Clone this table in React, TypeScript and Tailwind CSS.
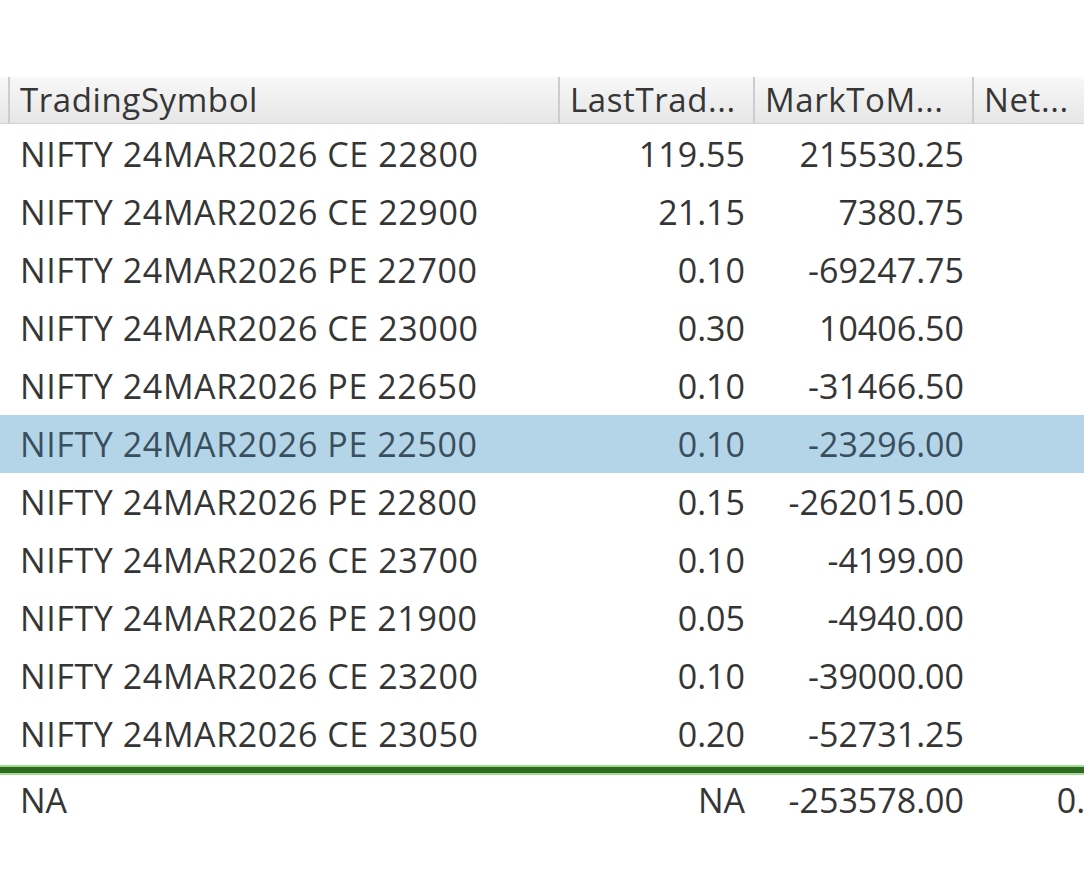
import * as React from "react"

const rows: [string, string, string][] = [
  ["NIFTY 24MAR2026 CE 22800", "119.55", "215530.25"],
  ["NIFTY 24MAR2026 CE 22900", "21.15", "7380.75"],
  ["NIFTY 24MAR2026 PE 22700", "0.10", "-69247.75"],
  ["NIFTY 24MAR2026 CE 23000", "0.30", "10406.50"],
  ["NIFTY 24MAR2026 PE 22650", "0.10", "-31466.50"],
  ["NIFTY 24MAR2026 PE 22500", "0.10", "-23296.00"],
  ["NIFTY 24MAR2026 PE 22800", "0.15", "-262015.00"],
  ["NIFTY 24MAR2026 CE 23700", "0.10", "-4199.00"],
  ["NIFTY 24MAR2026 PE 21900", "0.05", "-4940.00"],
  ["NIFTY 24MAR2026 CE 23200", "0.10", "-39000.00"],
  ["NIFTY 24MAR2026 CE 23050", "0.20", "-52731.25"],
]

const cols = "grid grid-cols-[8px_550px_195px_219px_160px]"

function HeaderCell({ children }: { children?: React.ReactNode }) {
  return (
    <div className="flex h-full items-center overflow-hidden whitespace-nowrap border-l-2 border-[#cdcdcd] pl-[10px] text-[33px] tracking-[0.6px] text-[#363636]">
      {children}
    </div>
  )
}

export default function App() {
  return (
    <div
      className="h-[880px] w-[1084px] overflow-hidden bg-white pt-[77px]"
      style={{ fontFamily: '"Open Sans", "Noto Sans", sans-serif' }}
    >
      <div className="w-[1132px]">
        <div
          className={`${cols} h-[47px] border-b border-[#d2d2d2] bg-gradient-to-b from-[#f8f8f8] to-[#e6e6e6]`}
        >
          <div />
          <HeaderCell>TradingSymbol</HeaderCell>
          <HeaderCell>LastTrad...</HeaderCell>
          <HeaderCell>MarkToM...</HeaderCell>
          <HeaderCell>Net...</HeaderCell>
        </div>

        <div className="pt-[1px]">
          {rows.map(([sym, ltp, mtm], i) => (
            <div
              key={i}
              className={`${cols} h-[58px] items-center text-[34px] ${
                i === 5 ? "bg-[#b4d5e8] text-[#3a4f5e]" : "text-[#353535]"
              }`}
            >
              <div />
              <div className="whitespace-nowrap pl-[12px] tracking-[0.6px]">{sym}</div>
              <div className="pr-[8px] text-right">{ltp}</div>
              <div className="pr-[8px] text-right">{mtm}</div>
              <div />
            </div>
          ))}
        </div>

        <div className="mt-[2px] h-[10px] border-y-2 border-[#a3d990] bg-[#2c6b1f]" />

        <div className={`${cols} h-[40px] items-center text-[34px] text-[#353535]`}>
          <div />
          <div className="pl-[12px]">NA</div>
          <div className="pr-[8px] text-right">NA</div>
          <div className="pr-[8px] text-right">-253578.00</div>
          <div className="pr-[8px] text-right">0.00</div>
        </div>
      </div>
    </div>
  )
}
